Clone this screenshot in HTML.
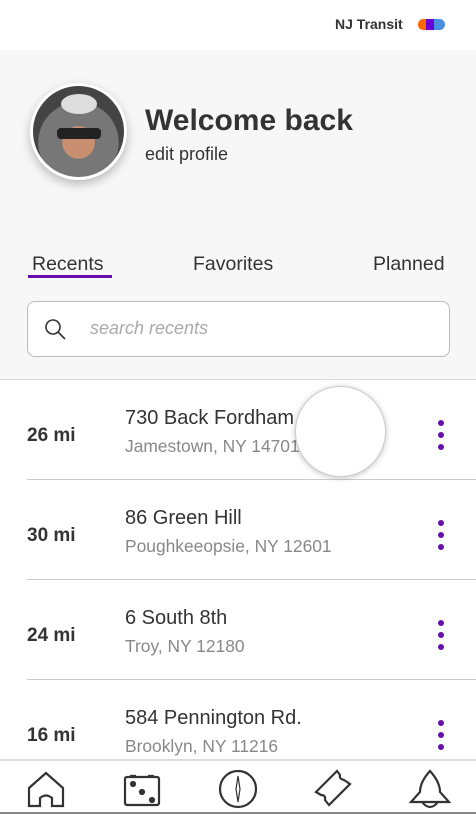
<!DOCTYPE html>
<html><head><style>
*{margin:0;padding:0;box-sizing:border-box}
body{width:476px;height:814px;overflow:hidden;font-family:"Liberation Sans",sans-serif;background:#fff;position:relative;color:#333}
.a{position:absolute}
.row{position:absolute;left:0;width:476px;height:100px;background:#fff}
.row .sep{position:absolute;left:27px;right:0;bottom:0;height:1px;background:#ccc}
.mi{position:absolute;left:27px;top:45px;font-weight:bold;font-size:19px;color:#333}
.t1{position:absolute;left:125px;top:27px;font-size:20px;color:#333}
.t2{position:absolute;left:125px;top:56px;font-size:17.4px;color:#888}
.dots{position:absolute;left:438px;top:40px;width:6px}
.dots i{display:block;width:6px;height:6px;border-radius:3px;background:#6a0dad;margin-bottom:6px}
</style></head><body>
<div class="a" style="top:0;left:0;width:476px;height:50px;background:#fff"></div>
<div class="a" style="top:16px;left:335px;font-size:14px;font-weight:bold;color:#333">NJ Transit</div>
<div class="a" style="top:19px;left:418px;width:27px;height:11px;">
<div class="a" style="left:0;top:0;width:10px;height:11px;background:#ff6a00;border-radius:5px 0 0 5px"></div>
<div class="a" style="left:8px;top:0;width:9px;height:11px;background:#6a00d6"></div>
<div class="a" style="left:16px;top:0;width:11px;height:11px;background:#4a90e2;border-radius:0 6px 6px 0"></div>
</div>
<div class="a" style="top:50px;left:0;width:476px;height:330px;background:#f7f7f7"></div>
<div class="a" style="top:83px;left:30px;width:97px;height:97px;border-radius:50%;background:#fff;box-shadow:0 4px 10px rgba(0,0,0,.25)">
<div class="a" style="left:3px;top:3px;width:91px;height:91px;border-radius:50%;background:radial-gradient(circle at 50% 62%,#c89070 0 22%,#777 23% 55%,#444 56%);overflow:hidden">
<div class="a" style="left:24px;top:42px;width:44px;height:11px;background:#222;border-radius:4px"></div>
<div class="a" style="left:28px;top:8px;width:36px;height:20px;background:#ddd;border-radius:50%"></div>
</div></div>
<div class="a" style="top:104px;left:145px;font-size:30px;font-weight:bold;color:#333">Welcome back</div>
<div class="a" style="top:144px;left:145px;font-size:18px;color:#333">edit profile</div>
<div class="a" style="top:253px;left:32px;font-size:19.5px;color:#333">Recents</div>
<div class="a" style="top:275px;left:28px;width:84px;height:3px;background:#6a0dad"></div>
<div class="a" style="top:253px;left:193px;font-size:19.5px;color:#333">Favorites</div>
<div class="a" style="top:253px;left:373px;font-size:19.5px;color:#333">Planned</div>
<div class="a" style="top:301px;left:27px;width:423px;height:56px;border:1px solid #bbb;border-radius:8px;background:#fff"></div>
<svg class="a" style="top:318px;left:44px" width="24" height="24" viewBox="0 0 24 24" fill="none" stroke="#333" stroke-width="1.6"><circle cx="9" cy="9" r="7"/><path d="M14 14l7 7"/></svg>
<div class="a" style="top:318px;left:90px;font-size:18px;font-style:italic;color:#aaa">search recents</div>
<div class="a" style="top:379px;left:0;width:476px;height:2px;background:#ddd"></div>
<div class="row" style="top:380px"><div class="mi">26 mi</div><div class="t1">730 Back Fordham</div><div class="t2">Jamestown, NY 14701</div><div class="dots"><i></i><i></i><i></i></div><div class="sep"></div></div>
<div class="row" style="top:480px"><div class="mi">30 mi</div><div class="t1">86 Green Hill</div><div class="t2">Poughkeeopsie, NY 12601</div><div class="dots"><i></i><i></i><i></i></div><div class="sep"></div></div>
<div class="row" style="top:580px"><div class="mi">24 mi</div><div class="t1">6 South 8th</div><div class="t2">Troy, NY 12180</div><div class="dots"><i></i><i></i><i></i></div><div class="sep"></div></div>
<div class="row" style="top:680px"><div class="mi">16 mi</div><div class="t1">584 Pennington Rd.</div><div class="t2">Brooklyn, NY 11216</div><div class="dots"><i></i><i></i><i></i></div></div>
<div class="a" style="top:386px;left:295px;width:91px;height:91px;border-radius:50%;background:#fff;border:1px solid #ccc;box-shadow:0 1px 6px rgba(0,0,0,.25)"></div>
<div class="a" style="top:759px;left:0;width:476px;height:55px;background:#fff;border-top:2px solid #ddd;border-bottom:2px solid #888"></div>
<svg class="a" style="top:762px;left:0" width="476" height="52" viewBox="0 0 476 52" fill="none" stroke="#333" stroke-width="2.2">
<path d="M29 26L46 11L63 26V44H52V36Q46 31 40 36V44H29Z"/>
<rect x="125" y="15" width="34" height="28" rx="2"/><path d="M130 14h6M148 14h6"/>
<circle cx="133" cy="22" r="2" fill="#333"/><circle cx="142" cy="30" r="2" fill="#333"/><circle cx="152" cy="38" r="2" fill="#333"/>
<circle cx="238" cy="27" r="18"/><path d="M238 14L240 27L238 40L236 27Z" stroke-width="1.2"/>
<path d="M316 30L337 9L340 13Q339 17 344 18L350 22L329 43L325 38Q326 33 321 33Z"/>
<path d="M430 9Q420 20 420 30L411 40H449L440 30Q440 20 430 9Z M422 40Q430 50 438 40"/>
</svg>
</body></html>
